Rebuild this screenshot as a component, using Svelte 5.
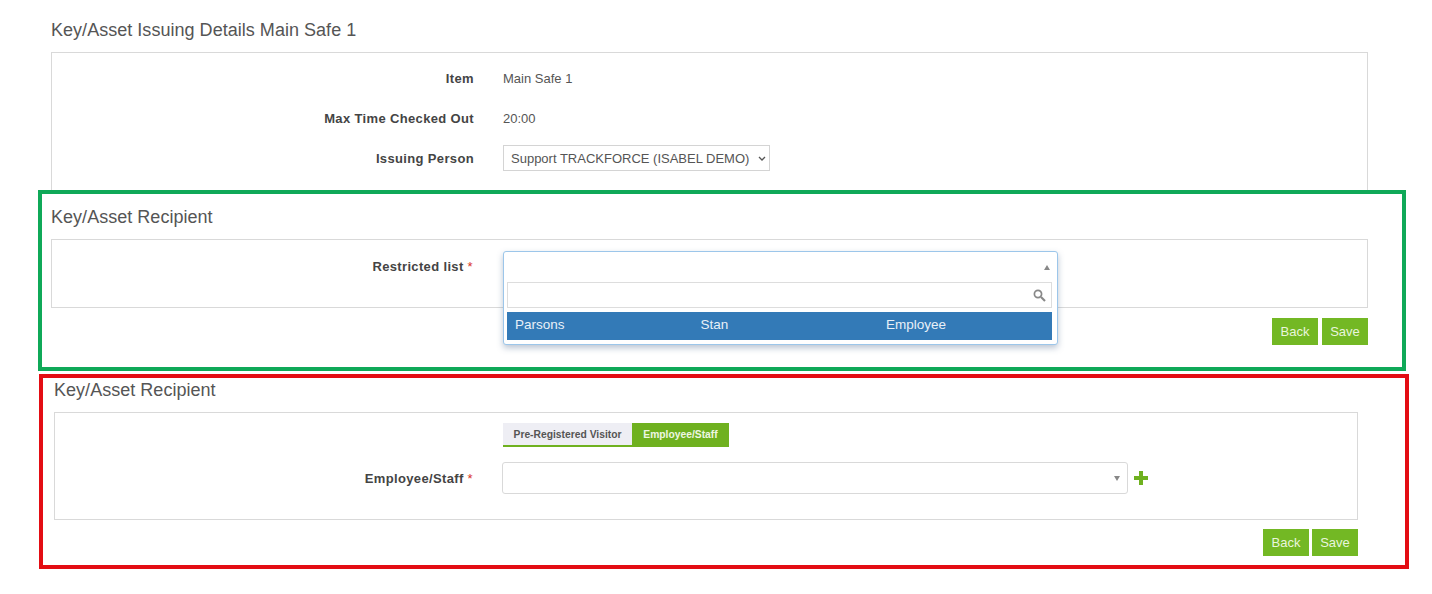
<script>
  const details = [
    { label: "Item", value: "Main Safe 1" },
    { label: "Max Time Checked Out", value: "20:00" }
  ];
  const option = ["Parsons", "Stan", "Employee"];
</script>

<div class="page">
  <section class="issuing">
    <h2>Key/Asset Issuing Details Main Safe 1</h2>
    <div class="panel top-panel">
      {#each details as row}
        <div class="row">
          <span class="label">{row.label}</span>
          <span class="value">{row.value}</span>
        </div>
      {/each}
      <div class="row">
        <span class="label">Issuing Person</span>
        <div class="native-select">
          Support TRACKFORCE (ISABEL DEMO)
          <svg width="8" height="5" viewBox="0 0 8 5"><path d="M1 1l3 3 3-3" fill="none" stroke="#555" stroke-width="1.3" /></svg>
        </div>
      </div>
    </div>
  </section>

  <section class="box green">
    <h2>Key/Asset Recipient</h2>
    <div class="panel restricted">
      <span class="label">Restricted list <em>*</em></span>
      <div class="combo">
        <div class="combo-head"><i class="caret up"></i></div>
        <div class="combo-search">
          <svg width="13" height="13" viewBox="0 0 13 13">
            <circle cx="5" cy="5" r="3.6" fill="none" stroke="#888" stroke-width="1.7" />
            <path d="M8 8l4 4" stroke="#888" stroke-width="2.2" />
          </svg>
        </div>
        <div class="combo-option">
          {#each option as cell}<span>{cell}</span>{/each}
        </div>
      </div>
    </div>
    <div class="actions">
      <button>Back</button>
      <button>Save</button>
    </div>
  </section>

  <section class="box red">
    <h2>Key/Asset Recipient</h2>
    <div class="panel employee">
      <div class="tabs">
        <span class="tab">Pre-Registered Visitor</span>
        <span class="tab active">Employee/Staff</span>
      </div>
      <div class="employee-row">
        <span class="label">Employee/Staff <em>*</em></span>
        <div class="picker"><i class="caret down"></i></div>
        <svg class="plus" width="14" height="14" viewBox="0 0 14 14"><path d="M5 0h4v5h5v4H9v5H5V9H0V5h5z" fill="#6fb11f" /></svg>
      </div>
    </div>
    <div class="actions">
      <button>Back</button>
      <button>Save</button>
    </div>
  </section>
</div>

<style>
  :global(body) {
    margin: 0;
    background: #fff;
    font-family: "Liberation Sans", Arial, sans-serif;
    color: #555;
  }

  .page {
    width: 1432px;
    height: 594px;
    overflow: hidden;
  }

  h2 {
    margin: 0;
    font-size: 18px;
    font-weight: 400;
    line-height: 22px;
    color: #555;
    letter-spacing: 0.03px;
  }

  .panel {
    box-sizing: border-box;
    border: 1px solid #d9d9d9;
  }

  .label {
    font-size: 13px;
    font-weight: 700;
    letter-spacing: 0.35px;
    color: #444;
    text-align: right;
    white-space: nowrap;
  }

  .label em {
    font-style: normal;
    font-weight: 400;
    color: #d9342b;
  }

  /* issuing details */
  .issuing {
    box-sizing: border-box;
    height: 190px;
    padding: 19px 64px 0 51px;
  }

  .top-panel {
    height: 138px;
    margin-top: 11px;
    border-bottom: 0;
    padding-top: 5px;
  }

  .row {
    display: grid;
    grid-template-columns: 422px auto;
    column-gap: 29px;
    align-items: center;
    height: 40px;
    justify-content: start;
  }

  .value {
    font-size: 13px;
    color: #555;
  }

  .native-select {
    box-sizing: border-box;
    display: flex;
    align-items: center;
    justify-content: space-between;
    width: 267px;
    height: 26px;
    padding: 0 3px 0 7px;
    border: 1px solid #d4d4d4;
    font-size: 13px;
    color: #555;
    white-space: nowrap;
  }

  /* framed sections */
  .box {
    box-sizing: border-box;
    border-style: solid;
    border-width: 4px;
  }

  .green {
    width: 1368px;
    height: 181px;
    margin-left: 38px;
    border-color: #0fa958;
    padding: 12px 34px 0 9px;
  }

  .red {
    width: 1370px;
    height: 195px;
    margin: 3px 0 0 39px;
    border-color: #e30d13;
    padding: 1px 47px 0 11px;
  }

  .restricted {
    position: relative;
    height: 69px;
    margin-top: 11px;
    padding-top: 19px;
  }

  .restricted .label,
  .employee-row .label {
    display: block;
    width: 421px;
  }

  .combo {
    position: absolute;
    top: 11px;
    left: 451px;
    z-index: 2;
    box-sizing: border-box;
    width: 555px;
    height: 94px;
    background: #fff;
    border: 1px solid #9cc6ea;
    border-radius: 3px;
    box-shadow: 0 3px 6px rgba(60, 90, 130, 0.35);
    padding: 0 5px 0 3px;
  }

  .combo-head {
    display: flex;
    align-items: center;
    justify-content: flex-end;
    height: 30px;
    padding-right: 2px;
  }

  .combo-search {
    box-sizing: border-box;
    display: flex;
    align-items: center;
    justify-content: flex-end;
    height: 26px;
    padding-right: 5px;
    border: 1px solid #ddd;
  }

  .combo-option {
    display: grid;
    grid-template-columns: repeat(3, 185.5px);
    align-items: center;
    height: 28px;
    margin-top: 4px;
    padding: 0 0 4px 8px;
    box-sizing: border-box;
    background: #337ab7;
    color: #e8f0f7;
    font-size: 13.5px;
  }

  .caret {
    display: block;
    width: 0;
    height: 0;
    border-left: 3px solid transparent;
    border-right: 3px solid transparent;
  }

  .caret.up {
    border-bottom: 5px solid #888;
  }

  .caret.down {
    border-top: 5px solid #888;
  }

  .actions {
    display: flex;
    justify-content: flex-end;
    gap: 4px;
    margin-top: 10px;
  }

  button {
    box-sizing: border-box;
    width: 46px;
    height: 27px;
    padding: 0;
    border: 0;
    background: #73b824;
    color: #e9f5dc;
    font-family: inherit;
    font-size: 13px;
  }

  .red .actions {
    gap: 3px;
    margin-top: 9px;
  }

  .employee {
    height: 108px;
    margin-top: 11px;
    padding-top: 10px;
  }

  .tabs {
    display: flex;
    width: 226px;
    height: 24px;
    margin-left: 448px;
    font-size: 10.3px;
    font-weight: 700;
  }

  .tab {
    display: flex;
    align-items: center;
    justify-content: center;
    width: 129px;
    box-sizing: border-box;
    background: #eeeef4;
    color: #555;
    border-bottom: 2px solid #6fb11f;
  }

  .tab.active {
    width: 97px;
    background: #6fb11f;
    color: #eef7e2;
  }

  .employee-row {
    display: flex;
    align-items: center;
    margin-top: 15px;
  }

  .employee-row .label {
    width: 418px;
  }

  .picker {
    box-sizing: border-box;
    display: flex;
    align-items: center;
    justify-content: flex-end;
    width: 626px;
    height: 32px;
    margin-left: 29px;
    padding-right: 7px;
    border: 1px solid #d9d9d9;
    border-radius: 3px;
  }

  .plus {
    margin-left: 6px;
  }
</style>
